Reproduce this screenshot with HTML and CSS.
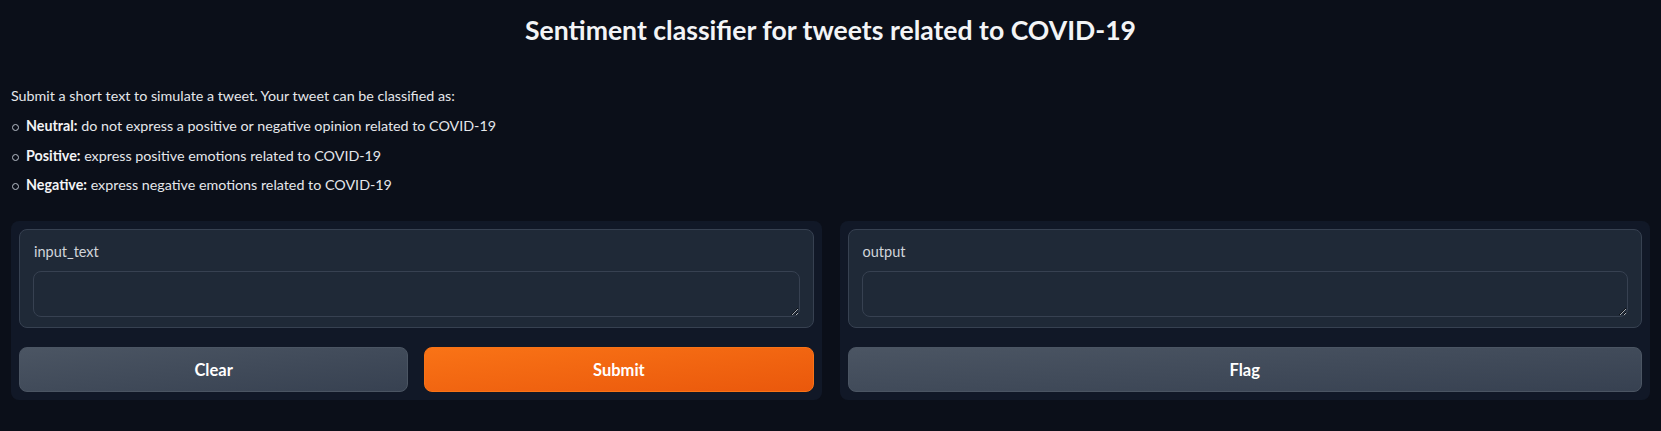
FILE: index.html
```html
<!DOCTYPE html>
<html lang="en">
<head>
<meta charset="utf-8">
<title>Sentiment classifier</title>
<link rel="stylesheet" href="styles.css">
</head>
<body>
<div class="app">
  <h1 class="title">Sentiment classifier for tweets related to COVID-19</h1>
  <div class="desc">
    <p class="intro">Submit a short text to simulate a tweet. Your tweet can be classified as:</p>
    <ul class="classes">
      <li><strong>Neutral:</strong> do not express a positive or negative opinion related to COVID-19</li>
      <li><strong>Positive:</strong> express positive emotions related to COVID-19</li>
      <li><strong>Negative:</strong> express negative emotions related to COVID-19</li>
    </ul>
  </div>
  <div class="row">
    <div class="panel">
      <label class="block">
        <span class="label">input_text</span>
        <textarea class="box"></textarea>
      </label>
      <div class="btns">
        <button class="btn secondary">Clear</button>
        <button class="btn primary">Submit</button>
      </div>
    </div>
    <div class="panel">
      <label class="block">
        <span class="label">output</span>
        <textarea class="box"></textarea>
      </label>
      <div class="btns">
        <button class="btn secondary">Flag</button>
      </div>
    </div>
  </div>
</div>
</body>
</html>
```
FILE: styles.css
```css
* { box-sizing: border-box; }
html, body {
  margin: 0;
  background: #0b0f19;
}
body {
  font-family: "Lato", "Open Sans", sans-serif;
  color: #e5e7eb;
}
.app {
  padding: 0 11px;
}
.title {
  margin: 14px 0 0;
  font-size: 26.6px;
  line-height: 32px;
  font-weight: 700;
  text-align: center;
  color: #f3f4f6;
}
.desc {
  margin-top: 40px;
  font-size: 14.3px;
  line-height: 20px;
}
.intro {
  margin: 0;
}
.classes {
  list-style: none;
  margin: 10px 0 0;
  padding: 0;
  display: flex;
  flex-direction: column;
  gap: 9.5px;
}
.classes li {
  position: relative;
  padding-left: 15px;
}
.classes li::before {
  content: "";
  position: absolute;
  left: 1px;
  top: 8px;
  width: 5px;
  height: 5px;
  border: 1px solid #b8bec8;
  border-radius: 50%;
}
.classes strong {
  font-weight: 700;
  color: #f3f4f6;
}
.row {
  display: flex;
  gap: 18px;
  margin-top: 26px;
}
.panel {
  flex: 1;
  background: #111827;
  border-radius: 8px;
  padding: 8px;
  display: flex;
  flex-direction: column;
  gap: 19px;
}
.block {
  display: flex;
  flex-direction: column;
  background: #1f2937;
  border: 1px solid #374151;
  border-radius: 8px;
  padding: 12px 13px 10px;
}
.label {
  font-size: 14.5px;
  line-height: 20px;
  color: #d1d5db;
  margin-bottom: 9px;
  padding-left: 1px;
}
.box {
  display: block;
  width: 100%;
  height: 46px;
  background: #1f2937;
  border: 1px solid #374151;
  border-radius: 8px;
  resize: vertical;
  color: #e5e7eb;
  font: inherit;
  outline: none;
}
.btns {
  display: flex;
  gap: 16px;
}
.btn {
  flex: 1;
  height: 45px;
  border-radius: 8px;
  font-family: inherit;
  font-size: 16.5px;
  font-weight: 700;
  color: #ffffff;
  cursor: pointer;
}
.secondary {
  background: linear-gradient(to bottom right, #4b5563, #374151);
  border: 1px solid #4b5563;
}
.primary {
  background: linear-gradient(to bottom right, #f97316, #ea580c);
  border: 1px solid #f97316;
}
```
